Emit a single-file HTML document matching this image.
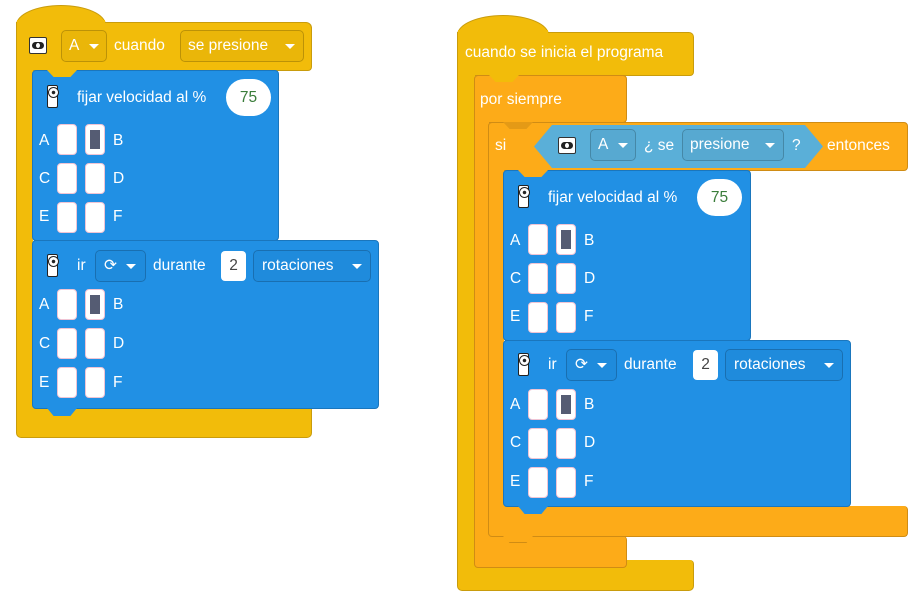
<!DOCTYPE html>
<html><head><meta charset="utf-8"><style>
*{margin:0;padding:0;box-sizing:border-box}
body{width:919px;height:603px;background:#fff;position:relative;overflow:hidden;font-family:"Liberation Sans",sans-serif;color:#fff;font-size:15.5px}
.a{position:absolute}
.y{background:#f2bc0a;border:1px solid #c99c0c}
.o{background:#fdab18;border:1px solid #d08c14}
.b{background:#2190e4;border:1px solid #1a76bd;border-radius:4px}
.t{position:absolute;white-space:nowrap;line-height:18px}
.dd{position:absolute;border:1px solid rgba(0,0,0,.2);border-radius:5px;background:rgba(0,0,0,.03)}
.dd span{position:absolute;top:0;line-height:30px;white-space:nowrap}
.tri{position:absolute;width:0;height:0;border-left:5px solid transparent;border-right:5px solid transparent;border-top:5px solid #fff}
.slot{position:absolute;width:20px;height:31px;background:#fff;border-radius:4px;border:1px solid #f0c4d4}
.slot.on::after{content:"";position:absolute;left:4px;top:5px;width:10px;height:19px;background:#555c73}
.ico{position:absolute;width:11px;height:23px;background:#fff;border:1px solid #222;border-radius:2px}
.ico::before{content:"";position:absolute;left:0;top:1px;width:9px;height:9px;border:1px solid #222;border-radius:50%;background:radial-gradient(circle,#222 1.5px,#fff 2px)}
.oval{position:absolute;background:#fff;border-radius:19px;color:#3a7d3a;text-align:center}
.tab{position:absolute;width:30px;height:8px;background:#2190e4;clip-path:polygon(0 0,100% 0,78% 100%,22% 100%);border-radius:0 0 3px 3px}
.notch{position:absolute;width:30px;height:7px;clip-path:polygon(0 0,100% 0,78% 100%,22% 100%)}
.key{position:absolute;width:18px;height:17px;background:#fff;border:1px solid #333;border-radius:2px}
.key::before{content:"";position:absolute;left:2px;top:4px;width:12px;height:7px;background:#222;border-radius:4px}
.key::after{content:"";position:absolute;left:6px;top:5px;width:4px;height:5px;background:#fff;border-radius:50%}
</style></head><body>

<!-- LEFT -->
<div class="a y" style="left:16px;top:5px;width:90px;height:30px;border-radius:45px 45px 0 0/20px 20px 0 0;border-bottom:none"></div>
<div class="a y" style="left:16px;top:22px;width:296px;height:49px;border-radius:0 6px 4px 0;border-left:none;"></div>
<div class="a" style="left:17px;top:20px;width:88px;height:20px;background:#f2bc0a"></div>
<div class="a y" style="left:16px;top:22px;width:17px;height:398px;border-right:none;border-top:none"></div>
<div class="a y" style="left:16px;top:408px;width:296px;height:30px;border-radius:0 0 5px 5px;border-top:none"></div>
<div class="a" style="left:17px;top:25px;width:15px;height:395px;background:#f2bc0a"></div>
<div class="key" style="left:29px;top:37px"></div>
<div class="dd" style="left:61px;top:30px;width:46px;height:32px"><span style="left:7px">A</span><div class="tri" style="left:27px;top:13px"></div></div>
<div class="t" style="left:114px;top:37px">cuando</div>
<div class="dd" style="left:180px;top:30px;width:124px;height:32px"><span style="left:7px">se presione</span><div class="tri" style="left:104px;top:13px"></div></div>

<!-- left block1 -->
<div class="a b" style="left:32px;top:70px;width:247px;height:171px">
<div class="notch" style="left:14px;top:-1px;background:#f2bc0a"></div>
<div class="ico" style="left:14px;top:14px"></div>
<div class="t" style="left:44px;top:18px">fijar velocidad al %</div>
<div class="oval" style="left:193px;top:8px;width:45px;height:37px;line-height:37px">75</div>
<div class="t" style="left:6px;top:61px">A</div><div class="slot" style="left:24px;top:53px"></div><div class="slot on" style="left:52px;top:53px"></div><div class="t" style="left:80px;top:61px">B</div>
<div class="t" style="left:6px;top:99px">C</div><div class="slot" style="left:24px;top:92px"></div><div class="slot" style="left:52px;top:92px"></div><div class="t" style="left:80px;top:99px">D</div>
<div class="t" style="left:6px;top:137px">E</div><div class="slot" style="left:24px;top:131px"></div><div class="slot" style="left:52px;top:131px"></div><div class="t" style="left:80px;top:137px">F</div>
</div>
<!-- left block2 -->
<div class="a b" style="left:32px;top:240px;width:347px;height:169px">
<div class="ico" style="left:14px;top:13px"></div>
<div class="t" style="left:44px;top:16px">ir</div>
<div class="dd" style="left:62px;top:9px;width:51px;height:32px"><span style="left:8px">&#x27F3;</span><div class="tri" style="left:30px;top:13px"></div></div>
<div class="t" style="left:120px;top:16px">durante</div>
<div class="oval" style="left:188px;top:10px;width:25px;height:30px;line-height:30px;border-radius:4px;color:#444">2</div>
<div class="dd" style="left:220px;top:9px;width:118px;height:32px"><span style="left:8px">rotaciones</span><div class="tri" style="left:98px;top:13px"></div></div>
<div class="t" style="left:6px;top:55px">A</div><div class="slot" style="left:24px;top:48px"></div><div class="slot on" style="left:52px;top:48px"></div><div class="t" style="left:80px;top:55px">B</div>
<div class="t" style="left:6px;top:94px">C</div><div class="slot" style="left:24px;top:87px"></div><div class="slot" style="left:52px;top:87px"></div><div class="t" style="left:80px;top:94px">D</div>
<div class="t" style="left:6px;top:133px">E</div><div class="slot" style="left:24px;top:126px"></div><div class="slot" style="left:52px;top:126px"></div><div class="t" style="left:80px;top:133px">F</div>
<div class="tab" style="left:14px;top:167px"></div>
</div>

<!-- RIGHT -->
<div class="a y" style="left:457px;top:15px;width:92px;height:30px;border-radius:46px 46px 0 0/20px 20px 0 0;border-bottom:none"></div>
<div class="a y" style="left:457px;top:32px;width:237px;height:44px;border-radius:0 5px 4px 0;border-left:none"></div>
<div class="a" style="left:458px;top:30px;width:90px;height:20px;background:#f2bc0a"></div>
<div class="a y" style="left:457px;top:32px;width:18px;height:538px;border-right:none;border-top:none"></div>
<div class="a y" style="left:457px;top:560px;width:237px;height:31px;border-radius:0 4px 5px 5px;border-top:none"></div>
<div class="a" style="left:458px;top:35px;width:16px;height:530px;background:#f2bc0a"></div>
<div class="t" style="left:465px;top:44px">cuando se inicia el programa</div>

<div class="a o" style="left:474px;top:75px;width:153px;height:48px;border-radius:4px"></div>
<div class="notch" style="left:489px;top:75px;background:#f2bc0a"></div>
<div class="a o" style="left:474px;top:115px;width:15px;height:430px;border-right:none;border-top:none"></div>
<div class="a o" style="left:474px;top:536px;width:153px;height:32px;border-radius:0 4px 4px 4px;border-top:none"></div>
<div class="a" style="left:475px;top:110px;width:14px;height:430px;background:#fdab18"></div>
<div class="t" style="left:480px;top:91px">por siempre</div>

<div class="a o" style="left:488px;top:122px;width:420px;height:49px;border-radius:4px"></div>
<div class="notch" style="left:503px;top:122px;background:#fdab18;filter:brightness(.9)"></div>
<div class="a o" style="left:488px;top:160px;width:16px;height:360px;border-right:none;border-top:none"></div>
<div class="a o" style="left:488px;top:506px;width:420px;height:31px;border-radius:0 4px 4px 4px;border-top:none"></div>
<div class="a" style="left:489px;top:150px;width:15px;height:370px;background:#fdab18"></div>
<div class="notch" style="left:503px;top:536px;background:#fdab18;border-bottom:1px solid #d08c14"></div>
<div class="t" style="left:495px;top:137px">si</div>
<div class="a" style="left:534px;top:125px;width:289px;height:43px;background:#5aafd8;clip-path:polygon(18px 0,calc(100% - 18px) 0,100% 50%,calc(100% - 18px) 100%,18px 100%,0 50%)"></div>
<div class="key" style="left:558px;top:137px"></div>
<div class="dd" style="left:590px;top:129px;width:46px;height:32px"><span style="left:7px">A</span><div class="tri" style="left:27px;top:13px"></div></div>
<div class="t" style="left:644px;top:137px">¿ se</div>
<div class="dd" style="left:682px;top:129px;width:102px;height:32px"><span style="left:7px">presione</span><div class="tri" style="left:82px;top:13px"></div></div>
<div class="t" style="left:792px;top:137px">?</div>
<div class="t" style="left:827px;top:137px">entonces</div>

<div class="a b" style="left:503px;top:170px;width:248px;height:171px">
<div class="notch" style="left:14px;top:-1px;background:#fdab18"></div>
<div class="ico" style="left:14px;top:14px"></div>
<div class="t" style="left:44px;top:18px">fijar velocidad al %</div>
<div class="oval" style="left:193px;top:8px;width:45px;height:37px;line-height:37px">75</div>
<div class="t" style="left:6px;top:61px">A</div><div class="slot" style="left:24px;top:53px"></div><div class="slot on" style="left:52px;top:53px"></div><div class="t" style="left:80px;top:61px">B</div>
<div class="t" style="left:6px;top:99px">C</div><div class="slot" style="left:24px;top:92px"></div><div class="slot" style="left:52px;top:92px"></div><div class="t" style="left:80px;top:99px">D</div>
<div class="t" style="left:6px;top:137px">E</div><div class="slot" style="left:24px;top:131px"></div><div class="slot" style="left:52px;top:131px"></div><div class="t" style="left:80px;top:137px">F</div>
</div>
<div class="a b" style="left:503px;top:340px;width:348px;height:167px">
<div class="ico" style="left:14px;top:12px"></div>
<div class="t" style="left:44px;top:15px">ir</div>
<div class="dd" style="left:62px;top:8px;width:51px;height:32px"><span style="left:8px">&#x27F3;</span><div class="tri" style="left:30px;top:13px"></div></div>
<div class="t" style="left:120px;top:15px">durante</div>
<div class="oval" style="left:189px;top:9px;width:25px;height:30px;line-height:30px;border-radius:4px;color:#444">2</div>
<div class="dd" style="left:221px;top:8px;width:118px;height:32px"><span style="left:8px">rotaciones</span><div class="tri" style="left:98px;top:13px"></div></div>
<div class="t" style="left:6px;top:55px">A</div><div class="slot" style="left:24px;top:48px"></div><div class="slot on" style="left:52px;top:48px"></div><div class="t" style="left:80px;top:55px">B</div>
<div class="t" style="left:6px;top:93px">C</div><div class="slot" style="left:24px;top:87px"></div><div class="slot" style="left:52px;top:87px"></div><div class="t" style="left:80px;top:93px">D</div>
<div class="t" style="left:6px;top:132px">E</div><div class="slot" style="left:24px;top:126px"></div><div class="slot" style="left:52px;top:126px"></div><div class="t" style="left:80px;top:132px">F</div>
<div class="tab" style="left:14px;top:165px"></div>
</div>
</body></html>
